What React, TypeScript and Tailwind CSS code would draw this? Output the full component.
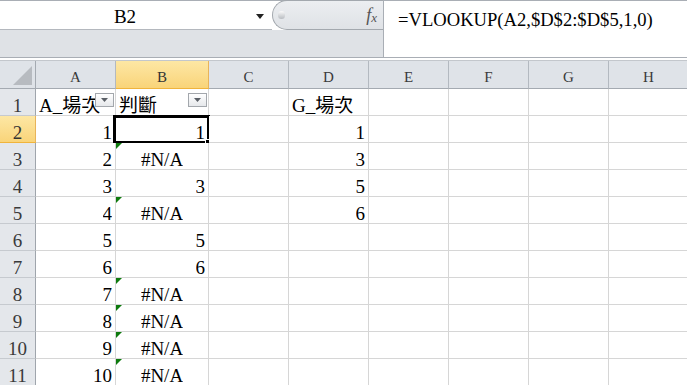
import React from "react";

type Cell = { t: string; a: "l" | "r" | "c"; err?: boolean; filter?: boolean };

const COLS = [
  { l: "A", w: "w-[80px]" },
  { l: "B", w: "w-[93px]" },
  { l: "C", w: "w-[80px]" },
  { l: "D", w: "w-[80px]" },
  { l: "E", w: "w-[80px]" },
  { l: "F", w: "w-[80px]" },
  { l: "G", w: "w-[80px]" },
  { l: "H", w: "w-[80px]" },
];

const NA: Cell = { t: "#N/A", a: "c", err: true };
const R = (t: string): Cell => ({ t, a: "r" });

const ROWS: (Cell | null)[][] = [
  [{ t: "A_場次", a: "l", filter: true }, { t: "判斷", a: "l", filter: true }, null, { t: "G_場次", a: "l" }],
  [R("1"), R("1"), null, R("1")],
  [R("2"), NA, null, R("3")],
  [R("3"), R("3"), null, R("5")],
  [R("4"), NA, null, R("6")],
  [R("5"), R("5")],
  [R("6"), R("6")],
  [R("7"), NA],
  [R("8"), NA],
  [R("9"), NA],
  [R("10"), NA],
];

function FilterBtn() {
  return (
    <div className="absolute right-[1px] top-[4px] flex h-[14px] w-[19px] items-center justify-center border border-[#a3a7ac] bg-gradient-to-b from-[#ffffff] to-[#e6e8eb]">
      <svg width="7" height="4" viewBox="0 0 7 4">
        <polygon points="0,0 7,0 3.5,4" fill="#5a5f66" />
      </svg>
    </div>
  );
}

function DataCell({ cell, w, selected }: { cell: Cell | null; w: string; selected?: boolean }) {
  const align =
    cell?.a === "r" ? "justify-end pr-[3px]" : cell?.a === "c" ? "justify-center" : "justify-start pl-[3px]";
  return (
    <div
      className={`relative flex h-[27px] shrink-0 items-end border-b border-r border-[#d6d6d6] bg-white ${w} ${align}`}
    >
      {cell && (
        <span className="overflow-hidden whitespace-nowrap text-[19px] leading-[19px] text-black">{cell.t}</span>
      )}
      {cell?.err && (
        <div className="absolute left-0 top-0 h-0 w-0 border-r-[6px] border-t-[6px] border-r-transparent border-t-[#0d7a0d]" />
      )}
      {cell?.filter && <FilterBtn />}
      {selected && (
        <>
          <div className="pointer-events-none absolute -left-[3px] -top-[1px] h-[29px] w-[97px] border-[3px] border-black" />
          <div className="absolute -bottom-[3px] -right-[3px] h-[6px] w-[6px] border border-white bg-black" />
        </>
      )}
    </div>
  );
}

export default function App() {
  return (
    <div className="h-[385px] w-[687px] overflow-hidden bg-white font-[family-name:'Liberation_Serif','Noto_Sans_CJK_TC',serif] text-black">
      {/* Formula bar */}
      <div className="flex h-[58px] border-b border-t border-[#a9aeb5]">
        <div className="flex w-[384px] shrink-0 flex-col border-r border-[#a9aeb5]">
          <div className="flex h-[29px]">
            <div className="flex w-[272px] items-center border-b border-[#b4b8be] bg-white">
              <div className="flex w-[250px] justify-center pt-[2px] text-[19px] leading-[19px]">B2</div>
              <svg width="8" height="5" viewBox="0 0 8 5" className="ml-[6px] mt-[2px]">
                <polygon points="0,0 8,0 4,5" fill="#222" />
              </svg>
            </div>
            <div className="-mt-px flex h-[30px] flex-1 items-center rounded-l-full border border-r-0 border-[#a3a8ae] bg-gradient-to-b from-[#eceef1] to-[#dfe2e6]">
              <div className="ml-[5px] h-[8px] w-[7px] rounded-full bg-gradient-to-b from-[#fafafa] to-[#b8bcc1]" />
              <div className="ml-auto mr-[6px] flex items-end text-[#555] italic">
                <span className="text-[18px] leading-[18px]">f</span>
                <span className="text-[13px] leading-[13px]">x</span>
              </div>
            </div>
          </div>
          <div className="flex-1 bg-[#dfe2e6]" />
        </div>
        <div className="flex-1 whitespace-nowrap bg-white pl-[14px] pt-[9px] text-[18.6px] leading-[19px]">
          =VLOOKUP(A2,$D$2:$D$5,1,0)
        </div>
      </div>

      {/* Sheet */}
      <div className="mt-[2px]">
        {/* Column headers */}
        <div className="flex h-[29px] border-t border-[#c3c7cc]">
          <div className="relative h-[28px] w-[36px] shrink-0 border-b border-r border-[#a4aab1] bg-[#dfe3e8]">
            <svg width="36" height="28" viewBox="0 0 36 28" className="absolute left-0 top-0">
              <polygon points="13,24 32,24 32,5" fill="#b7bbc0" />
            </svg>
          </div>
          {COLS.map((c) => {
            const sel = c.l === "B";
            return (
              <div
                key={c.l}
                className={`flex h-[28px] shrink-0 items-end justify-center border-b border-r pb-[3px] text-[15px] leading-[15px] ${c.w} ${
                  sel
                    ? "border-b-[#f0b43c] border-r-[#e8b45a] bg-gradient-to-b from-[#fde7a4] to-[#f9d479] text-[#333]"
                    : "border-[#b3b9c0] border-b-[#a4aab1] bg-[#dfe3e8] text-[#3a3a3a]"
                }`}
              >
                {c.l}
              </div>
            );
          })}
        </div>

        {ROWS.map((row, i) => {
          const n = i + 1;
          const selRow = n === 2;
          return (
            <div key={n} className="flex">
              <div
                className={`flex h-[27px] w-[36px] shrink-0 items-end justify-center border-b border-r text-[19px] leading-[19px] ${
                  selRow
                    ? "border-b-[#f0b43c] border-r-[#e8b45a] bg-gradient-to-b from-[#fde7a4] to-[#f9d479] text-[#333]"
                    : "border-[#c6cacf] border-r-[#9fa5ac] bg-[#e4e7eb] text-[#3a3a3a]"
                }`}
              >
                {n}
              </div>
              {COLS.map((c, j) => (
                <DataCell key={c.l} cell={row[j] ?? null} w={c.w} selected={n === 2 && j === 1} />
              ))}
            </div>
          );
        })}
      </div>
    </div>
  );
}
